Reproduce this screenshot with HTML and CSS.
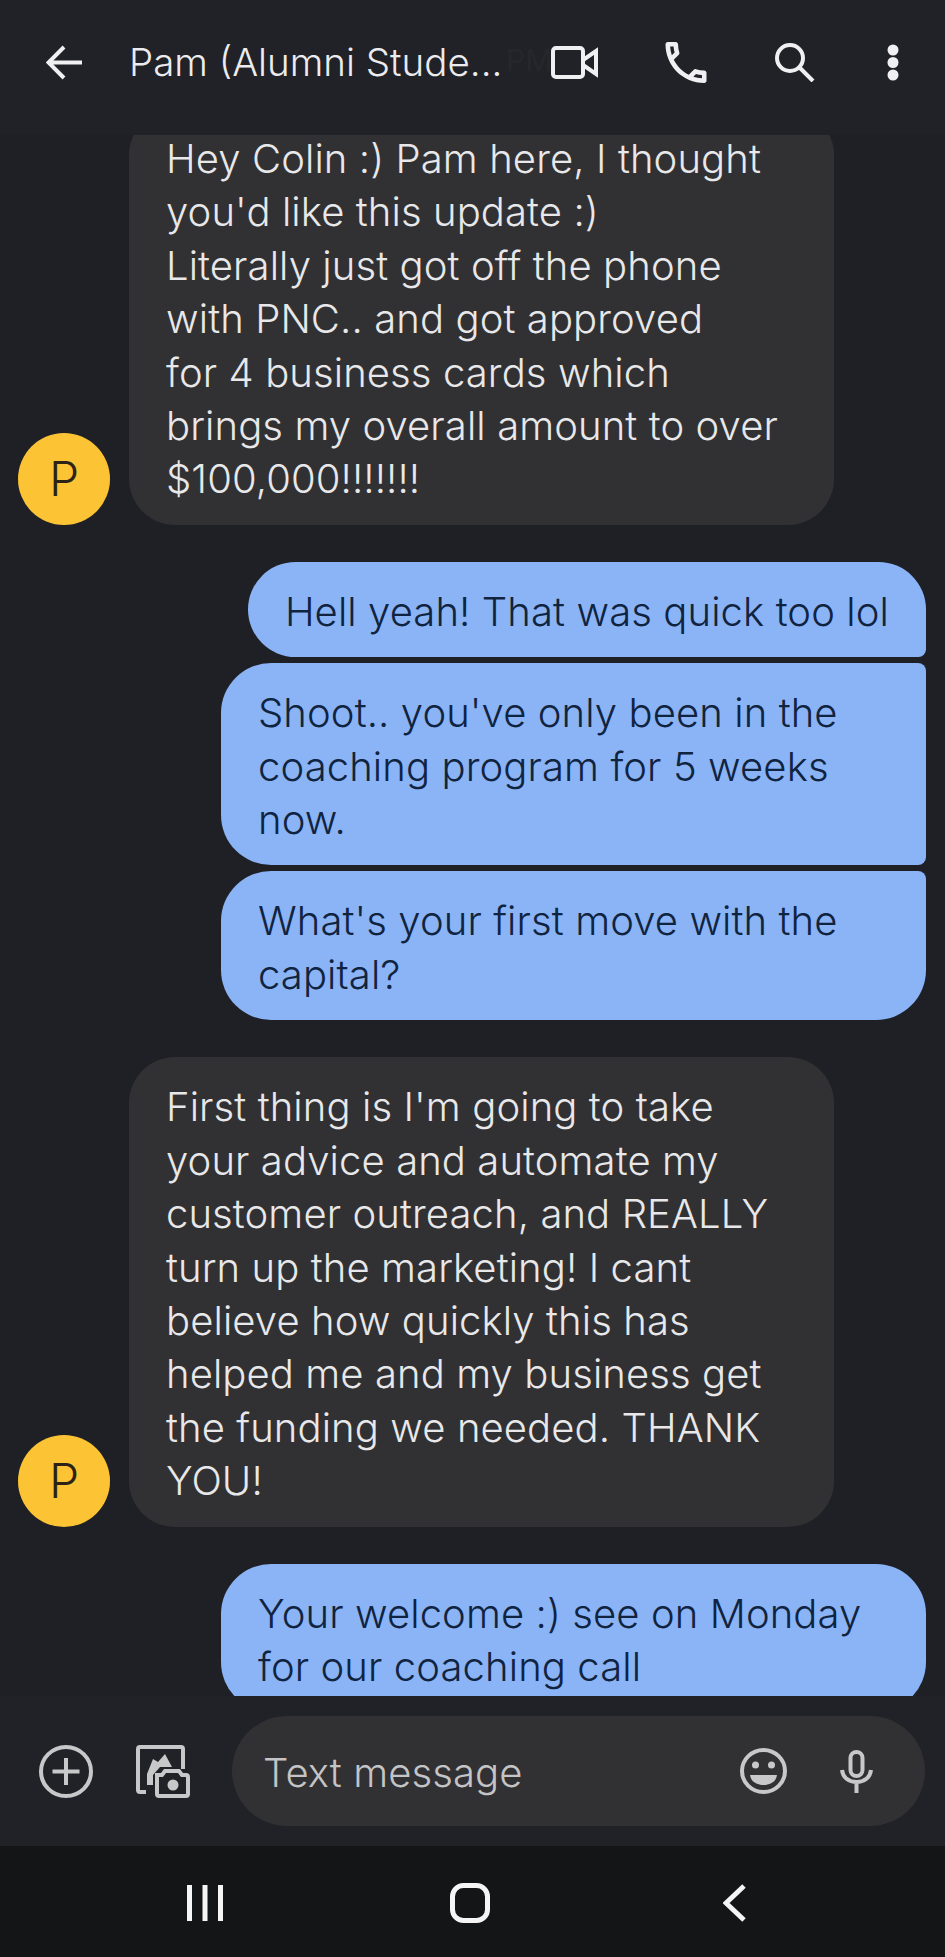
FILE: index.html
```html
<!DOCTYPE html>
<html lang="en">
  <head>
    <meta charset="UTF-8" />
    <meta name="viewport" content="width=device-width, initial-scale=1.0" />
    <title>Pam (Alumni Student)</title>
    <link rel="stylesheet" href="styles.css">
  </head>
  <body>
    <div class="phone">
      <header class="topbar">
        <svg class="ic-back" width="37" height="35" viewBox="0 0 37 35"><path d="M36 17.5H4M18 2 2.5 17.5 18 33" /></svg>
        <h1 class="title">Pam (Alumni Stude...</h1>
        <span class="ghost-time">PM</span>
        <div class="actions">
          <svg width="47" height="33" viewBox="0 0 47 33"><rect x="2" y="2" width="30" height="29" rx="3" /><path d="M32 14 45 5V28L32 19" /></svg>
          <svg width="42" height="41" viewBox="3 3 18 18"><path class="solid" d="M6.54 5c.06.89.21 1.76.45 2.59l-1.2 1.2c-.41-1.2-.67-2.47-.76-3.79h1.51m9.86 12.02c.85.24 1.72.39 2.6.45v1.49c-1.32-.09-2.59-.35-3.8-.75l1.2-1.19M7.5 3H4c-.55 0-1 .45-1 1 0 9.39 7.61 17 17 17 .55 0 1-.45 1-1v-3.49c0-.55-.45-1-1-1-1.24 0-2.45-.2-3.57-.57-.1-.04-.21-.05-.31-.05-.26 0-.51.1-.71.29l-2.2 2.2c-2.83-1.45-5.15-3.76-6.59-6.59l2.2-2.2c.28-.28.36-.67.25-1.02C8.7 6.45 8.5 5.25 8.5 4c0-.55-.45-1-1-1z" /></svg>
          <svg width="41" height="39" viewBox="0 0 41 39"><circle cx="16" cy="15" r="13" /><path d="M25 24 39 38" /></svg>
          <svg class="ic-dots" width="12" height="37" viewBox="0 0 12 37"><circle class="solid" cx="6" cy="6" r="5.5" /><circle class="solid" cx="6" cy="18.5" r="5.5" /><circle class="solid" cx="6" cy="31" r="5.5" /></svg>
        </div>
      </header>

      <main class="thread">
        <div class="thread-inner">
          <div class="row">
            <div class="avatar">P</div>
            <div class="bubble in">Hey Colin :) Pam here, I thought<br />you'd like this update :)<br />Literally just got off the phone<br />with PNC.. and got approved<br />for 4 business cards which<br />brings my overall amount to over<br />$100,000!!!!!!!</div>
          </div>

          <div class="group">
            <div class="bubble out first">Hell yeah! That was quick too lol</div>
            <div class="bubble out wide">Shoot.. you've only been in the<br />coaching program for 5 weeks<br />now.</div>
            <div class="bubble out wide last">What's your first move with the<br />capital?</div>
          </div>

          <div class="row">
            <div class="avatar">P</div>
            <div class="bubble in">First thing is I'm going to take<br />your advice and automate my<br />customer outreach, and REALLY<br />turn up the marketing! I cant<br />believe how quickly this has<br />helped me and my business get<br />the funding we needed. THANK<br />YOU!</div>
          </div>

          <div class="group">
            <div class="bubble out wide first last">Your welcome :) see on Monday<br />for our coaching call</div>
          </div>
        </div>
      </main>

      <footer class="composer">
        <svg class="ic-grey" width="54" height="53" viewBox="0 0 54 53"><ellipse cx="27" cy="26.5" rx="25" ry="24.5" /><path d="M27 13V40M13.5 26.5H40.5" /></svg>
        <svg class="ic-grey" width="54" height="53" viewBox="0 0 54 53">
          <path d="M10 47H4Q2 47 2 45V4Q2 2 4 2H45Q47 2 47 4V24" />
          <path class="solid" d="M11 40V29L17 14 22 17 29 9 36 22H24L17 30V40Z" />
          <path class="cutout" d="M21 30H26L29 26H43L46 30H50Q52 30 52 32V49Q52 51 50 51H23Q21 51 21 49Z" />
          <circle class="solid" cx="37" cy="40" r="5.500" />
        </svg>
        <div class="field">
          <span class="placeholder">Text message</span>
          <svg class="ic-grey ic-emoji" width="47" height="46" viewBox="0 0 47 46"><ellipse cx="23.500" cy="23" rx="21.500" ry="21" /><circle class="solid" cx="15.500" cy="17" r="3.500" /><circle class="solid" cx="31.500" cy="17" r="3.500" /><path class="solid" d="M10 27H37C36 34 30 37 23.500 37S11 34 10 27Z" /></svg>
          <svg class="ic-grey ic-mic" width="33" height="43" viewBox="0 0 33 43"><rect x="10.500" y="2" width="12" height="24" rx="6" /><path d="M2 20C3 28 9 32 16.500 32S30 28 31 20M16.500 32V43" /></svg>
        </div>
      </footer>

      <nav class="navbar">
        <svg width="36" height="38" viewBox="0 0 36 38"><path d="M2.500 1V37M18 1V37M33.500 1V37" /></svg>
        <svg width="40" height="40" viewBox="0 0 40 40"><rect x="2.500" y="2.500" width="35" height="35" rx="11" /></svg>
        <svg class="ic-chevron" width="23" height="38" viewBox="0 0 23 38"><path d="M21 2 3 19 21 36" /></svg>
      </nav>
    </div>
  </body>
</html>
```

FILE: styles.css
```css
* {
  box-sizing: border-box;
}
body {
  margin: 0;
  background-color: #1f2025;
  font-family: Inter, Roboto, "Liberation Sans", sans-serif;
}
.phone {
  width: 945px;
  height: 1957px;
  display: flex;
  flex-direction: column;
  overflow: hidden;
  position: relative;
}
svg {
  flex: none;
  display: block;
  fill: none;
  stroke: #f0f0f3;
  stroke-width: 4;
}
svg .solid {
  fill: #f0f0f3;
  stroke: none;
}

.topbar {
  height: 135px;
  flex: none;
  display: flex;
  align-items: center;
  padding: 0 46px 11px 46px;
  background-color: #212227;
  position: relative;
  z-index: 1;
}
.title {
  margin: 0 0 0 46px;
  font-size: 38.5px;
  font-weight: 350;
  color: #ececef;
  white-space: nowrap;
}
.ghost-time {
  position: absolute;
  left: 506px;
  top: 42px;
  font-size: 30px;
  color: #26272c;
}
.actions {
  margin-left: auto;
  display: flex;
  align-items: center;
  gap: 67px;
}
.ic-dots {
  margin-left: 5px;
}

/* messages */
.thread {
  height: 1571px;
  margin-top: -10px;
  flex: none;
  overflow: hidden;
  background-color: #1f2025;
}
.thread-inner {
  margin-top: -16px;
  padding: 0 19px 0 18px;
  display: flex;
  flex-direction: column;
  gap: 37px;
}
.row {
  display: flex;
  align-items: flex-end;
  gap: 19px;
}
.avatar {
  width: 92px;
  height: 92px;
  flex: none;
  border-radius: 50%;
  background-color: #fcc434;
  color: #2b2416;
  font-size: 48px;
  font-weight: 300;
  display: flex;
  align-items: center;
  justify-content: center;
}
.group {
  display: flex;
  flex-direction: column;
  align-items: flex-end;
  gap: 6px;
}
.bubble {
  padding: 23px 37px 19px;
  font-size: 40px;
  font-weight: 350;
  line-height: 53.4px;
  letter-spacing: 0.1px;
  white-space: nowrap;
}
.in {
  width: 705px;
  background-color: #313133;
  color: #e8e8ea;
  border-radius: 46px;
}
.out {
  background-color: #8ab4f6;
  color: #10233f;
  border-radius: 50px 8px 8px 50px;
}
.wide {
  width: 705px;
}
.first {
  border-top-right-radius: 50px;
}
.last {
  border-bottom-right-radius: 50px;
}

/* bottom bar */
.composer {
  height: 150px;
  flex: none;
  display: flex;
  align-items: center;
  gap: 43px;
  padding: 0 20px 0 39px;
  background-color: #212227;
}
.composer svg {
  stroke: #c8c8ca;
}
.composer svg .solid {
  fill: #c8c8ca;
}
.composer svg .cutout {
  fill: #212227;
}
.field {
  width: 693px;
  height: 110px;
  margin-left: -1px;
  flex: none;
  display: flex;
  align-items: center;
  padding: 0 52px 0 31px;
  border-radius: 55px;
  background-color: #313133;
}
.placeholder {
  margin-top: 3px;
  font-size: 40px;
  font-weight: 350;
  letter-spacing: 0.1px;
  color: #c4c4c6;
}
.field .ic-emoji {
  margin-left: auto;
}
.field .ic-mic {
  margin-left: 53px;
}

/* android buttons */
.navbar {
  flex: 1;
  display: flex;
  align-items: center;
  gap: 227px;
  padding: 2px 0 0 187px;
  background-color: #141517;
}
.navbar svg {
  stroke: #f5f5f5;
  stroke-width: 5;
}
.ic-chevron {
  margin-left: 6px;
}
```
